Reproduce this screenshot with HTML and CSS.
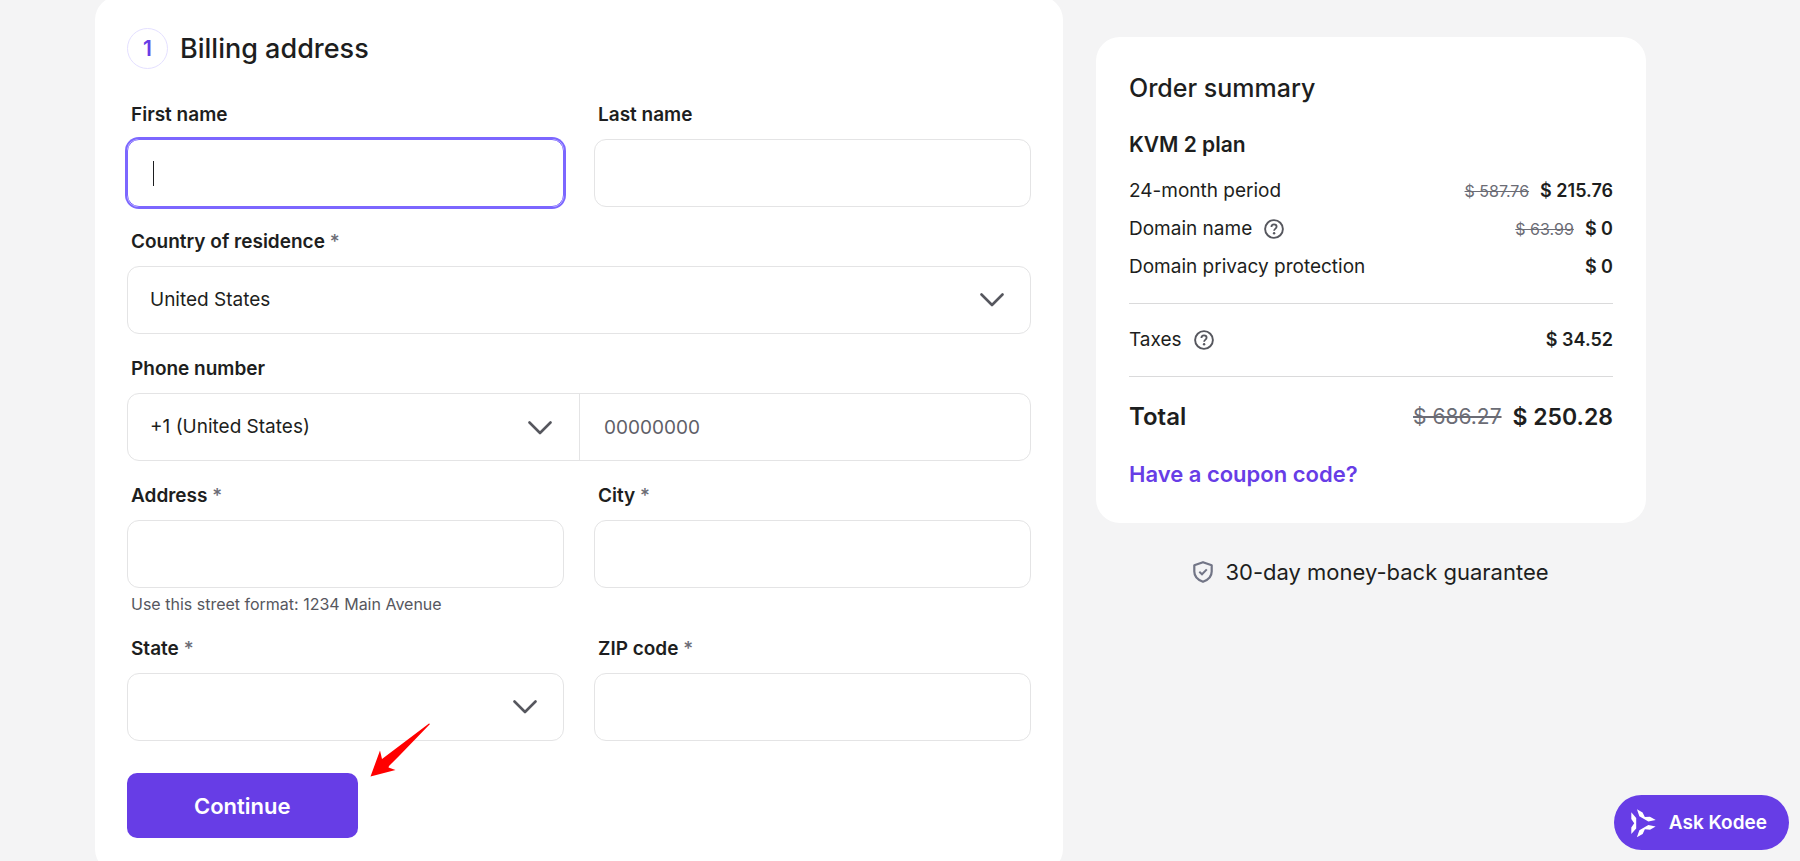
FILE: index.html
```html
<!DOCTYPE html>
<html lang="en">
<head>
<meta charset="utf-8">
<title>Checkout</title>
<link rel="stylesheet" href="styles.css">
</head>
<body>
<svg class="sprite" aria-hidden="true">
  <symbol id="chevron" viewBox="0 0 24 14"><path d="M1.5 1.5 12 12 22.500 1.500" fill="none" stroke="currentColor" stroke-width="2.600" stroke-linecap="round" stroke-linejoin="round"/></symbol>
  <symbol id="help" viewBox="0 0 20 20"><circle cx="10" cy="10" r="8.900" fill="none" stroke="currentColor" stroke-width="1.900"/><path d="M7.400 7.900C7.400 6.300 8.500 5.300 10 5.300s2.600 1 2.600 2.400c0 1.800-2.500 2-2.500 4.100" fill="none" stroke="currentColor" stroke-width="1.800"/><circle cx="10.100" cy="14.300" r="1.200" fill="currentColor"/></symbol>
</svg>
<main class="checkout">
  <form class="card billing">
    <div class="step">
      <span class="step-number">1</span>
      <h1 class="step-title">Billing address</h1>
    </div>
    <div class="fields">
      <div class="field">
        <label class="label" for="first">First name</label>
        <input class="control control-active" id="first" type="text">
      </div>
      <div class="field">
        <label class="label" for="last">Last name</label>
        <input class="control" id="last" type="text">
      </div>
      <div class="field field-wide">
        <label class="label" for="country">Country of residence <span class="required">*</span></label>
        <div class="picker">
          <select class="control" id="country"><option>United States</option></select>
          <svg class="chevron" aria-hidden="true"><use href="#chevron"/></svg>
        </div>
      </div>
      <div class="field field-wide">
        <label class="label" for="phone">Phone number</label>
        <div class="phone">
          <div class="picker">
            <select class="control control-plain" aria-label="Country calling code"><option>+1 (United States)</option></select>
            <svg class="chevron" aria-hidden="true"><use href="#chevron"/></svg>
          </div>
          <input class="control control-plain phone-number" id="phone" type="tel" placeholder="00000000">
        </div>
      </div>
      <div class="field">
        <label class="label" for="address">Address <span class="required">*</span></label>
        <input class="control" id="address" type="text">
        <p class="hint">Use this street format: 1234 Main Avenue</p>
      </div>
      <div class="field">
        <label class="label" for="city">City <span class="required">*</span></label>
        <input class="control" id="city" type="text">
      </div>
      <div class="field">
        <label class="label" for="state">State <span class="required">*</span></label>
        <div class="picker">
          <select class="control" id="state"><option></option></select>
          <svg class="chevron" aria-hidden="true"><use href="#chevron"/></svg>
        </div>
      </div>
      <div class="field">
        <label class="label" for="zip">ZIP code <span class="required">*</span></label>
        <input class="control" id="zip" type="text">
      </div>
    </div>
    <div class="actions">
      <button class="continue" type="button">Continue</button>
      <svg class="pointer" viewBox="0 0 60 54" aria-hidden="true"><path d="M0.500 53.500 10 27.500 12 36 59 0.500 60 1 30 32 19 43 18.500 44.500 25.500 47Z" fill="#f00"/></svg>
    </div>
  </form>

  <aside class="side">
    <section class="card summary">
      <h2 class="summary-title">Order summary</h2>
      <h3 class="plan">KVM 2 plan</h3>
      <div class="lines">
        <div class="line"><span>24-month period</span><span class="amount"><s class="old">$ 587.76</s><b class="price">$ 215.76</b></span></div>
        <div class="line"><span class="with-help">Domain name <svg class="help" aria-hidden="true"><use href="#help"/></svg></span><span class="amount"><s class="old">$ 63.99</s><b class="price">$ 0</b></span></div>
        <div class="line"><span>Domain privacy protection</span><b class="price">$ 0</b></div>
      </div>
      <hr class="rule">
      <div class="line"><span class="with-help">Taxes <svg class="help" aria-hidden="true"><use href="#help"/></svg></span><b class="price">$ 34.52</b></div>
      <hr class="rule">
      <div class="line total"><b>Total</b><span class="amount"><s class="old">$ 686.27</s><b class="price">$ 250.28</b></span></div>
      <a class="coupon" href="#">Have a coupon code?</a>
    </section>
    <p class="guarantee">
      <svg class="shield" viewBox="0 0 20 22" aria-hidden="true"><path d="M10 1.200 18.700 4.300V10.500C18.700 15.500 15 19 10 20.800 5 19 1.300 15.500 1.300 10.500V4.300Z" fill="none" stroke="currentColor" stroke-width="2.200" stroke-linejoin="round"/><path d="M6.300 10.800 9 13.300 13.800 8.400" fill="none" stroke="currentColor" stroke-width="2"/></svg>
      30-day money-back guarantee
    </p>
  </aside>
</main>
<button class="kodee" type="button">
  <svg class="kodee-mark" viewBox="0 0 26 30" aria-hidden="true">
    <g fill="currentColor">
      <path id="petal" d="M1.300 4.300 6.200 10V20.400L1.300 26V19.500L4.200 15.200 1.300 11Z"/>
      <use href="#petal" transform="rotate(120 11.300 15.200)"/>
      <use href="#petal" transform="rotate(240 11.300 15.200)"/>
    </g>
  </svg>
  Ask Kodee
</button>
</body>
</html>
```
FILE: styles.css
```css
* {
  box-sizing: border-box;
}

body {
  margin: 0;
  background: #f4f4f5;
  color: #1d1e20;
  font: 400 19px/28px Inter, "Liberation Sans", sans-serif;
  overflow: hidden;
}

h1, h2, h3, p {
  margin: 0;
  font-weight: 500;
}

b {
  font-weight: 600;
}

input, select, button {
  font: inherit;
  color: inherit;
}

.sprite {
  position: absolute;
  width: 0;
  height: 0;
}

.checkout {
  display: grid;
  grid-template-columns: 968fr 550fr;
  gap: 33px;
  align-items: start;
  padding: 0 154px 0 95px;
}

.card {
  background: #fff;
  border-radius: 24px;
}

.billing {
  margin-top: -4px;
  padding: 32px 32px 35px;
}

.step {
  display: flex;
  align-items: center;
  gap: 12px;
  margin-bottom: 32px;
}

.step-number {
  display: grid;
  place-items: center;
  width: 41px;
  height: 41px;
  border: 1px solid #e4e0ff;
  border-radius: 50%;
  color: #673de6;
  font-size: 21px;
  font-weight: 600;
}

.step-title {
  font-size: 27px;
  line-height: 36px;
}

.fields {
  display: grid;
  grid-template-columns: 1fr 1fr;
  gap: 21px 30px;
}

.field-wide {
  grid-column: 1 / -1;
}

.label {
  display: block;
  margin-bottom: 10px;
  padding-left: 4px;
  font-weight: 600;
}

.required {
  color: #6b6c75;
  font-weight: 500;
}

.control {
  display: block;
  width: 100%;
  height: 68px;
  padding: 0 22px;
  border: 1px solid #e4e4e5;
  border-radius: 12px;
  background: transparent;
  appearance: none;
  outline: 0;
}

.control::placeholder {
  color: #5f6068;
  opacity: 1;
}

.control-active {
  border-color: #7c67ff;
  box-shadow: 0 0 0 2px #7c67ff;
  background: linear-gradient(#1d1e20, #1d1e20) 25px center / 1px 25px no-repeat;
  caret-color: transparent;
}

.picker {
  position: relative;
}

.chevron {
  position: absolute;
  top: 27px;
  right: 27px;
  width: 24px;
  height: 14px;
  color: #56575e;
  pointer-events: none;
}

.phone {
  display: grid;
  grid-template-columns: 1fr 1fr;
  border: 1px solid #e4e4e5;
  border-radius: 12px;
}

.control-plain {
  height: 66px;
  border: 0;
}

.phone-number {
  padding: 0 24px;
  border-left: 1px solid #e4e4e5;
  border-radius: 0;
}

.hint {
  margin-top: 6px;
  padding-left: 4px;
  color: #56575e;
  font-size: 16px;
  font-weight: 400;
  line-height: 20px;
}

.actions {
  position: relative;
  width: fit-content;
  margin-top: 32px;
}

.continue {
  display: block;
  height: 65px;
  padding: 0 67px;
  border: 0;
  border-radius: 10px;
  background: #673de6;
  color: #fff;
  font-size: 22px;
  font-weight: 600;
}

.pointer {
  position: absolute;
  top: -50px;
  left: calc(100% + 12px);
  width: 60px;
  height: 54px;
}

.side {
  padding-top: 37px;
}

.summary {
  padding: 32px 33px 33px;
}

.summary-title {
  margin-bottom: 22px;
  font-size: 25px;
  line-height: 38px;
}

.plan {
  margin-bottom: 16px;
  font-size: 21px;
  font-weight: 600;
  line-height: 32px;
}

.lines {
  display: grid;
  gap: 10px;
}

.line {
  display: flex;
  justify-content: space-between;
  align-items: center;
}

.with-help {
  display: flex;
  align-items: center;
  gap: 12px;
}

.help {
  width: 20px;
  height: 20px;
  color: #56575e;
}

.amount {
  display: flex;
  align-items: center;
  gap: 11px;
}

.price {
  font-size: 18px;
}

.old {
  color: #6b6c75;
  font-size: 16px;
}

.rule {
  margin: 22px 0;
  border: 0;
  border-top: 1px solid #dadadb;
}

.total {
  font-size: 24px;
  line-height: 36px;
}

.total .price {
  font-size: 23px;
}

.total .old {
  font-size: 21px;
}

.coupon {
  display: block;
  margin-top: 23px;
  color: #673de6;
  font-size: 22px;
  font-weight: 600;
  line-height: 32px;
  text-decoration: none;
}

.guarantee {
  display: flex;
  justify-content: center;
  align-items: center;
  gap: 12px;
  margin-top: 33px;
  font-size: 22px;
  font-weight: 400;
  line-height: 32px;
}

.shield {
  width: 20px;
  height: 22px;
  color: #727586;
}

.kodee {
  position: fixed;
  right: 11px;
  bottom: 11px;
  display: flex;
  align-items: center;
  gap: 13px;
  height: 55px;
  padding: 0 22px 0 16px;
  border: 0;
  border-radius: 28px;
  background: #673de6;
  color: #fff;
  font-size: 19px;
  font-weight: 600;
}

.kodee-mark {
  width: 26px;
  height: 30px;
}
```
